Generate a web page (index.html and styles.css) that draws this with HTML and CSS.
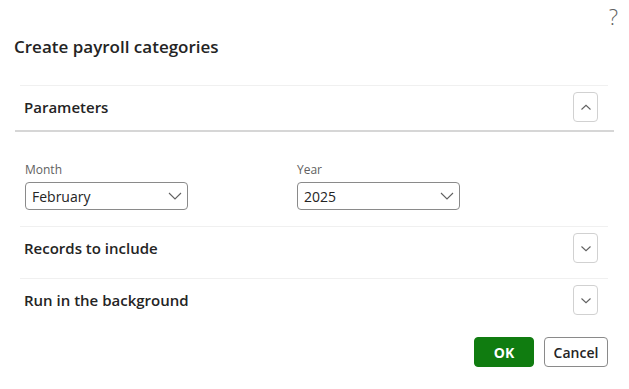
FILE: index.html
```html
<!DOCTYPE html>
<html lang="en">
<head>
    <meta charset="UTF-8">
    <meta name="viewport" content="width=device-width, initial-scale=1.0">
    <title>Create payroll categories</title>
    <link rel="stylesheet" href="styles.css">
</head>
<body>
    <div class="dialog">
        <div class="help-row"><span class="help">?</span></div>
        <h1>Create payroll categories</h1>

        <div class="group group-open">
            <div class="group-header">
                <span class="group-title">Parameters</span>
                <button class="toggle" aria-label="Collapse">
                    <svg width="12" height="7" viewBox="0 0 12 7"><path d="M1.5 5.5 L6 1.3 L10.5 5.5" fill="none" stroke="#616161" stroke-width="1.1"/></svg>
                </button>
            </div>
        </div>

        <div class="fields">
            <div class="field">
                <label>Month</label>
                <div class="select">
                    <span>February</span>
                    <svg width="14" height="8" viewBox="0 0 14 8"><path d="M1 1 L7 7 L13 1" fill="none" stroke="#616161" stroke-width="1.1"/></svg>
                </div>
            </div>
            <div class="field">
                <label>Year</label>
                <div class="select">
                    <span>2025</span>
                    <svg width="14" height="8" viewBox="0 0 14 8"><path d="M1 1 L7 7 L13 1" fill="none" stroke="#616161" stroke-width="1.1"/></svg>
                </div>
            </div>
        </div>

        <div class="group">
            <div class="group-header">
                <span class="group-title">Records to include</span>
                <button class="toggle" aria-label="Expand">
                    <svg width="12" height="7" viewBox="0 0 12 7"><path d="M1.5 1.5 L6 5.7 L10.5 1.5" fill="none" stroke="#616161" stroke-width="1.1"/></svg>
                </button>
            </div>
        </div>

        <div class="group">
            <div class="group-header">
                <span class="group-title">Run in the background</span>
                <button class="toggle" aria-label="Expand">
                    <svg width="12" height="7" viewBox="0 0 12 7"><path d="M1.5 1.5 L6 5.7 L10.5 1.5" fill="none" stroke="#616161" stroke-width="1.1"/></svg>
                </button>
            </div>
        </div>

        <div class="actions">
            <button class="btn btn-primary">OK</button>
            <button class="btn btn-cancel">Cancel</button>
        </div>
    </div>
</body>
</html>
```

FILE: styles.css
```css
/* Global */
body {
    margin: 0;
    padding: 0;
    background: #fff;
    font-family: "Open Sans", "Noto Sans", sans-serif;
    color: #242424;
}
.dialog {
    width: 629px;
    height: 389px;
}
.help-row {
    height: 33px;
    display: flex;
    justify-content: flex-end;
    padding-right: 11px;
}
.help {
    font-size: 22px;
    line-height: 33px;
    font-weight: 300;
    color: #616161;
}
h1 {
    margin: 2px 0 26px 14px;
    font-size: 17px;
    line-height: 24px;
    font-weight: 600;
    color: #242424;
}

/* Groups */
.group {
    margin: 0 15px;
}
.group-open {
    border-bottom: 2px solid #d6d6d6;
}
.group-header {
    display: flex;
    justify-content: space-between;
    align-items: flex-start;
    margin: 0 6px 0 5px;
    padding: 6px 10px 15px 4px;
    border-top: 1px solid #f0f0f0;
}
.group-open .group-header {
    padding-bottom: 8px;
}
.group-title {
    font-size: 15px;
    line-height: 30px;
    font-weight: 600;
    color: #242424;
}
.toggle {
    width: 25px;
    height: 30px;
    padding: 0;
    background: #fff;
    border: 1px solid #d1d1d1;
    border-radius: 4px;
    display: flex;
    align-items: center;
    justify-content: center;
}

/* Fields */
.fields {
    display: grid;
    grid-template-columns: 272px 163px;
    padding: 30px 0 16px 25px;
}
.field label {
    display: block;
    font-size: 12px;
    line-height: 16px;
    color: #616161;
    margin-bottom: 4px;
}
.select {
    width: 163px;
    height: 28px;
    box-sizing: border-box;
    border: 1px solid #8a8a8a;
    border-radius: 4px;
    display: flex;
    align-items: center;
    justify-content: space-between;
    padding: 0 5px 0 6px;
    font-size: 14px;
}

/* Footer */
.actions {
    display: flex;
    justify-content: flex-end;
    gap: 10px;
    padding: 7px 21px 0 0;
}
.btn {
    height: 30px;
    padding: 0;
    box-sizing: border-box;
    font-family: inherit;
    font-size: 14px;
    font-weight: 600;
    color: #242424;
    background: #fff;
    border: 1px solid #8a8a8a;
    border-radius: 4px;
}
.btn-cancel {
    width: 64px;
}
.btn-primary {
    width: 60px;
    background: #107c10;
    border-color: #107c10;
    color: #fff;
    font-weight: 700;
}
```
